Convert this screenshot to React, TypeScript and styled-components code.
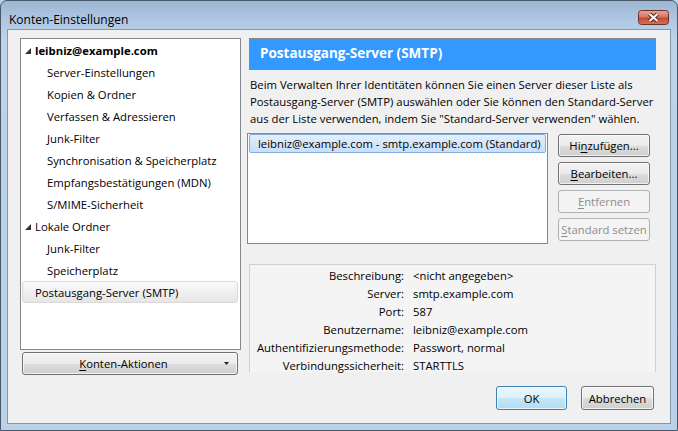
import styled, { createGlobalStyle } from 'styled-components'

const GlobalStyle = createGlobalStyle`
    html, body {
        margin: 0;
        padding: 0;
        background: #b9d1ea;
    }

    body {
        color: #000;
        font-family: 'Open Sans', 'Noto Sans', sans-serif;
        font-size: 11.3px;
    }
`

const Window = styled.div`
    background: linear-gradient(#9db6d3 0px, #b2cae4 22px, #bcd3ea 40px, #b9d1ea 100%);
    border: 1px solid #4b5868;
    border-radius: 7px 7px 0 0;
    box-sizing: border-box;
    display: flex;
    flex-direction: column;
    height: 431px;
    overflow: hidden;
    width: 678px;
`

const TitleBar = styled.div`
    display: flex;
    height: 28px;
    justify-content: space-between;
    padding: 0 8px;
`

const Title = styled.div`
    font-size: 12px;
    line-height: 17px;
    margin-top: 10px;
`

const CloseButton = styled.button`
    background: none;
    border: 0;
    height: 15px;
    margin-top: 9px;
    padding: 0;
    width: 31px;

    svg {
        display: block;
    }
`

const Client = styled.div`
    background: #f0f0f0;
    border: 1px solid #8397ad;
    display: flex;
    flex: 1;
    flex-direction: column;
    margin: 0 6px 6px;
    padding: 8px 14px 0 12px;
`

const Main = styled.div`
    display: flex;
    gap: 8px;
`

const LeftColumn = styled.div`
    display: flex;
    flex-direction: column;
    width: 221px;
`

const Tree = styled.div`
    background: #fff;
    border: 1px solid #828790;
    box-sizing: border-box;
    height: 312px;
    padding: 0 1px;
`

const TreeRow = styled.div<{ $level: number; $selected?: boolean; $bold?: boolean; $expander?: boolean }>`
    align-items: center;
    background: ${(p) => (p.$selected ? 'linear-gradient(#fafafa, #e6e6e6)' : 'transparent')};
    border: 1px solid ${(p) => (p.$selected ? '#d9d9d9' : 'transparent')};
    border-radius: 3px;
    box-sizing: border-box;
    display: flex;
    font-weight: ${(p) => (p.$bold ? 700 : 400)};
    gap: 4px;
    height: 22px;
    margin-right: 1px;
    padding-left: ${(p) => (p.$expander ? 2 : p.$level === 0 ? 12 : 24)}px;
    white-space: nowrap;

    svg {
        flex: none;
        margin-top: 1px;
    }
`

const Button = styled.button<{ $disabled?: boolean; $default?: boolean }>`
    align-items: center;
    background: ${(p) =>
        p.$disabled
            ? '#f4f4f4'
            : p.$default
              ? 'linear-gradient(#ebf6fd 0%, #dcf1fc 50%, #c4e6f9 51%, #b2dcf3 100%)'
              : 'linear-gradient(#f3f3f3 0%, #ebebeb 50%, #dddddd 51%, #cfcfcf 100%)'};
    border: 1px solid ${(p) => (p.$disabled ? '#adb2b5' : p.$default ? '#3c7fb1' : '#707070')};
    border-radius: 3px;
    box-shadow: inset 0 0 0 1px ${(p) => (p.$disabled ? '#f4f4f4' : 'rgba(255, 255, 255, 0.7)')};
    box-sizing: border-box;
    color: ${(p) => (p.$disabled ? '#8d8d8d' : '#000')};
    display: flex;
    font-family: inherit;
    font-size: 11.3px;
    height: 23px;
    justify-content: center;
    padding: 0;

    u {
        text-decoration-thickness: 1px;
        text-underline-offset: 2px;
    }
`

const ActionsButton = styled(Button)`
    margin: 2px 0 0 2px;
    padding-right: 8px;
    width: 216px;

    span {
        flex: 1;
        text-align: center;
    }
`

const RightColumn = styled.div`
    display: flex;
    flex: 1;
    flex-direction: column;
`

const Header = styled.div`
    background: #3399ff;
    border: 1px solid #808a95;
    box-sizing: border-box;
    color: #fff;
    font-size: 13.5px;
    font-weight: 700;
    height: 32px;
    line-height: 29px;
    padding-left: 10px;
`

const Description = styled.p`
    line-height: 17px;
    margin: 6px 0 0 1px;
    white-space: nowrap;
`

const ServerRow = styled.div`
    display: flex;
    gap: 10px;
    margin-top: 6px;
`

const ServerList = styled.div`
    background: #fff;
    border: 1px solid #828790;
    box-sizing: border-box;
    height: 111px;
    margin-left: -2px;
    padding: 0 1px;
    width: 301px;
`

const ServerItem = styled.div`
    background: linear-gradient(#e3effc, #c9def8);
    border: 1px solid #84acdd;
    border-radius: 2px;
    box-sizing: border-box;
    height: 19px;
    line-height: 17px;
    padding-left: 8px;
    white-space: nowrap;
`

const ButtonStack = styled.div`
    display: flex;
    flex-direction: column;
    gap: 5px;
    margin-top: 1px;
    width: 92px;
`

const Details = styled.div`
    background: #f4f4f4;
    border: 1px solid #d0d0d0;
    border-bottom: 0;
    box-sizing: border-box;
    column-gap: 9px;
    display: grid;
    grid-auto-rows: 18px;
    grid-template-columns: 149px 1fr;
    height: 108px;
    line-height: 18px;
    margin-top: 20px;
    padding: 2px 0 0 5px;
`

const Label = styled.div`
    text-align: right;
    white-space: nowrap;
`

const Value = styled.div`
    white-space: nowrap;
`

const Footer = styled.div`
    display: flex;
    gap: 14px;
    justify-content: flex-end;
    margin-top: 11px;
    padding-right: 2px;
`

const DialogButton = styled(Button)<{ $width: number }>`
    height: 24px;
    width: ${(p) => p.$width}px;
`

function Expander() {
    return (
        <svg width="6" height="6" viewBox="0 0 6 6">
            <path d="M6 0 L6 6 L0 6 Z" fill="#333" />
        </svg>
    )
}

function CloseIcon() {
    return (
        <svg width="31" height="15" viewBox="0 0 31 15">
            <defs>
                <linearGradient id="closeGrad" x1="0" y1="0" x2="0" y2="1">
                    <stop offset="0" stopColor="#e9a99a" />
                    <stop offset="0.45" stopColor="#d37865" />
                    <stop offset="0.55" stopColor="#c44a33" />
                    <stop offset="1" stopColor="#d4735c" />
                </linearGradient>
            </defs>
            <rect x="0.5" y="0.5" width="30" height="14" rx="3" fill="url(#closeGrad)" stroke="#6e3129" />
            <path d="M11.5 4 L19.5 11 M19.5 4 L11.5 11" stroke="#5b2a24" strokeWidth="4.2" />
            <path d="M11.5 4 L19.5 11 M19.5 4 L11.5 11" stroke="#f4f4f4" strokeWidth="2.2" />
        </svg>
    )
}

const treeItems = [
    { label: 'leibniz@example.com', level: 0, bold: true, expander: true },
    { label: 'Server-Einstellungen', level: 1 },
    { label: 'Kopien & Ordner', level: 1 },
    { label: 'Verfassen & Adressieren', level: 1 },
    { label: 'Junk-Filter', level: 1 },
    { label: 'Synchronisation & Speicherplatz', level: 1 },
    { label: 'Empfangsbestätigungen (MDN)', level: 1 },
    { label: 'S/MIME-Sicherheit', level: 1 },
    { label: 'Lokale Ordner', level: 0, expander: true },
    { label: 'Junk-Filter', level: 1 },
    { label: 'Speicherplatz', level: 1 },
    { label: 'Postausgang-Server (SMTP)', level: 0, selected: true },
]

const details = [
    ['Beschreibung:', '<nicht angegeben>'],
    ['Server:', 'smtp.example.com'],
    ['Port:', '587'],
    ['Benutzername:', 'leibniz@example.com'],
    ['Authentifizierungsmethode:', 'Passwort, normal'],
    ['Verbindungssicherheit:', 'STARTTLS'],
]

function App() {
    return (
        <>
            <GlobalStyle />
            <Window>
                <TitleBar>
                    <Title>Konten-Einstellungen</Title>
                    <CloseButton aria-label="Schließen">
                        <CloseIcon />
                    </CloseButton>
                </TitleBar>
                <Client>
                    <Main>
                        <LeftColumn>
                            <Tree>
                                {treeItems.map((item, i) => (
                                    <TreeRow
                                        key={i}
                                        $level={item.level}
                                        $bold={item.bold}
                                        $selected={item.selected}
                                        $expander={item.expander}
                                    >
                                        {item.expander && <Expander />}
                                        {item.label}
                                    </TreeRow>
                                ))}
                            </Tree>
                            <ActionsButton>
                                <span>
                                    <u>K</u>onten-Aktionen
                                </span>
                                <svg width="5" height="3" viewBox="0 0 5 3">
                                    <path d="M0 0 H5 L2.5 3 Z" fill="#222" />
                                </svg>
                            </ActionsButton>
                        </LeftColumn>
                        <RightColumn>
                            <Header>Postausgang-Server (SMTP)</Header>
                            <Description>
                                Beim Verwalten Ihrer Identitäten können Sie einen Server dieser Liste als
                                <br />
                                Postausgang-Server (SMTP) auswählen oder Sie können den Standard-Server
                                <br />
                                aus der Liste verwenden, indem Sie "Standard-Server verwenden" wählen.
                            </Description>
                            <ServerRow>
                                <ServerList>
                                    <ServerItem>leibniz@example.com - smtp.example.com (Standard)</ServerItem>
                                </ServerList>
                                <ButtonStack>
                                    <Button>
                                        Hi<u>n</u>zufügen...
                                    </Button>
                                    <Button>
                                        <u>B</u>earbeiten...
                                    </Button>
                                    <Button $disabled>
                                        <u>E</u>ntfernen
                                    </Button>
                                    <Button $disabled>
                                        <u>S</u>tandard setzen
                                    </Button>
                                </ButtonStack>
                            </ServerRow>
                            <Details>
                                {details.map(([label, value]) => [
                                    <Label key={label}>{label}</Label>,
                                    <Value key={label + '-value'}>{value}</Value>,
                                ])}
                            </Details>
                        </RightColumn>
                    </Main>
                    <Footer>
                        <DialogButton $default $width={71}>
                            OK
                        </DialogButton>
                        <DialogButton $width={73}>Abbrechen</DialogButton>
                    </Footer>
                </Client>
            </Window>
        </>
    )
}

export default App
